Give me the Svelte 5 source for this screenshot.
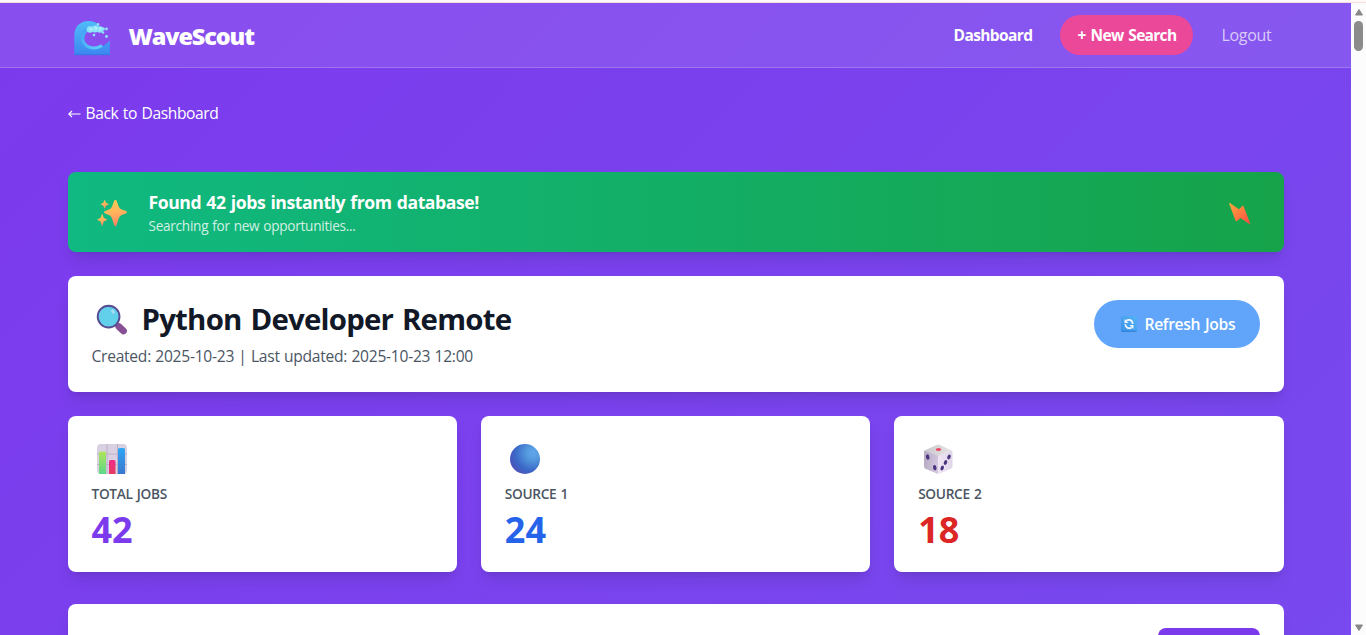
<script>
  const stats = [
    { label: 'TOTAL JOBS', value: 42, tone: 'violet', icon: 'chart' },
    { label: 'SOURCE 1', value: 24, tone: 'blue', icon: 'ball' },
    { label: 'SOURCE 2', value: 18, tone: 'red', icon: 'die' }
  ];
</script>

<div class="window">
  <div class="edge"></div>
  <div class="body">
    <div class="view">
      <nav>
        <div class="container bar">
          <a class="brand" href="#home">
            <svg width="36" height="36" viewBox="0 0 36 36" aria-hidden="true">
              <defs>
                <linearGradient id="wave" x1="0" y1="0" x2="0" y2="1">
                  <stop offset="0" stop-color="#50bdf8" />
                  <stop offset="1" stop-color="#3c86f0" />
                </linearGradient>
                <linearGradient id="curl" x1="0" y1="0" x2="1" y2="1">
                  <stop offset="0" stop-color="#43a0f4" />
                  <stop offset="1" stop-color="#5fd0fa" />
                </linearGradient>
              </defs>
              <path fill="url(#wave)" d="M.3 35V15C.3 6.400 6.500 1 14.500 1c4.300 0 7.800 1.300 10 4.200l2 4.300-12 1C10.500 14 9 20 12.500 24.300c6 6.500 17 3.500 23.300-3.800V35z" />
              <path fill="none" stroke="url(#curl)" stroke-width="3" d="M15 8.500C8 10.500 6.500 17 9.500 22c4 6.800 12 7.500 18.500 3.500" />
              <path fill="#3978e7" d="M.3 34h35.500v1.300H.3z" />
              <g fill="#8ee4f8">
                <circle cx="16" cy="9.500" r="3.300" /><circle cx="21" cy="9" r="3.500" /><circle cx="26" cy="9.500" r="3.200" />
                <circle cx="24" cy="4.500" r="1.400" /><circle cx="29.200" cy="9" r="1.700" /><circle cx="32.500" cy="9" r="1.400" />
                <circle cx="29" cy="12.500" r="1.200" /><circle cx="32.500" cy="16.500" r="1.400" /><circle cx="20" cy="15" r="1.300" />
              </g>
              <g fill="#b5f2fb" opacity=".75"><circle cx="17" cy="9" r="1.600" /><circle cx="22" cy="8" r="1.700" /><circle cx="26.500" cy="8.500" r="1.500" /></g>
            </svg>
            <span>WaveScout</span>
          </a>
          <div class="links">
            <a class="dash" href="#dashboard">Dashboard</a>
            <a class="new" href="#new">+ New Search</a>
            <a class="logout" href="#logout">Logout</a>
          </div>
        </div>
      </nav>

      <main class="container">
        <a class="back" href="#dashboard">
          <svg width="14" height="10" viewBox="0 0 14 10" aria-hidden="true"><path d="M12.500 5H1M4 2 .8 5 4 8" fill="none" stroke="#fff" stroke-width="1.100" /></svg>
          <span>Back to Dashboard</span>
        </a>

        <section class="notice">
          <svg class="spark" width="32" height="32" viewBox="0 0 32 32" aria-hidden="true">
            <defs>
              <linearGradient id="star" x1="0.300" y1="0" x2="0.500" y2="1">
                <stop offset="0" stop-color="#fccb55" /><stop offset=".5" stop-color="#ffb45b" /><stop offset="1" stop-color="#ff7f68" />
              </linearGradient>
            </defs>
            <g fill="url(#star)">
              <path d="M18.300 2.500q1-1.500 2.200 0l2.200 6q.8 2.300 3 3.100l4.300 1.500q2 1.200 0 2.400l-4.300 1.600q-2.200 1-3 3.300l-2.200 6.800q-1.200 2-2.300 0L16 20.400q-.8-2.300-3-3.300l-4-1.600q-2-1.200 0-2.400l4-1.500q2.200-.8 3-3.100z" />
              <path d="m8.700 1.500 1.300 3.300L13 6.200 10 7.700 8.700 11 7.400 7.700 4.500 6.200l2.900-1.400z" />
              <path d="m6.200 15.500 1.500 4.200L11.500 21.700l-3.800 1.900-1.500 4.600-1.600-4.600L1 21.700l3.600-2z" />
            </g>
          </svg>
          <div class="copy">
            <strong>Found 42 jobs instantly from database!</strong>
            <span>Searching for new opportunities...</span>
          </div>
          <svg class="bolt" width="24" height="24" viewBox="0 0 24 24" aria-hidden="true">
            <defs><linearGradient id="bolt" x1="0" y1="0" x2="1" y2="1"><stop offset="0" stop-color="#ffac3c" /><stop offset="1" stop-color="#fb4744" /></linearGradient></defs>
            <path fill="url(#bolt)" d="M1 1.200Q1.300.7 1.800 1L11 7.300 14.500 3.800q.8-.4 1.100.5L22.300 21.700q0 .8-.8.300L12.500 16 8.700 19.300q-.8.200-1.100-.6z" />
          </svg>
        </section>

        <section class="card title">
          <div>
            <h1>
              <svg width="32" height="32" viewBox="0 0 32 32" aria-hidden="true">
                <path d="m20 20 4 4" stroke="#65457e" stroke-width="3.500" />
                <path d="m22.800 22.500 4.700 4.500" stroke="#875096" stroke-width="6.800" stroke-linecap="round" />
                <circle cx="12.600" cy="12.600" r="10.900" fill="#62d0eb" stroke="#584b91" stroke-width="1.900" />
                <path d="M12.500 3.500q5 0 7 4" fill="none" stroke="#53bcdd" stroke-width="1" />
                <ellipse cx="17" cy="7.500" rx="1.700" ry="2.200" fill="#a8dcf8" transform="rotate(-35 17 7.500)" />
              </svg>
              <span>Python Developer Remote</span>
            </h1>
            <p>Created: 2025-10-23 | Last updated: 2025-10-23 12:00</p>
          </div>
          <button class="refresh">
            <svg width="16" height="16" viewBox="0 0 16 16" aria-hidden="true">
              <defs><linearGradient id="tile" x1="0" y1="1" x2="1" y2="0"><stop offset="0" stop-color="#3a91e9" /><stop offset="1" stop-color="#56b3f5" /></linearGradient></defs>
              <rect width="16" height="16" rx="1.500" fill="url(#tile)" /><path d="M.5 15.300h15" stroke="#347bd3" />
              <g fill="none" stroke="#f3f9ff" stroke-width="1.700"><path d="M5.300 4.600c3-1.700 6-.6 6.500 3.200M10.700 11.400c-3 1.700-6 .6-6.500-3.200" /></g>
              <path fill="#f3f9ff" d="M3.500 3v4H7.500zM12.500 13V9H8.500z" />
            </svg>
            <span>Refresh Jobs</span>
          </button>
        </section>

        <section class="stats">
          {#each stats as stat}
            <article class="card stat">
              {#if stat.icon === 'chart'}
                <svg width="32" height="32" viewBox="0 0 32 32" aria-hidden="true">
                  <defs>
                    <linearGradient id="green" x1="0" y1="0" x2="0" y2="1"><stop stop-color="#b1e45a" /><stop offset="1" stop-color="#5bd889" /></linearGradient>
                    <linearGradient id="pink" x1="0" y1="0" x2="0" y2="1"><stop stop-color="#ed2b89" /><stop offset="1" stop-color="#e63c61" /></linearGradient>
                    <linearGradient id="azure" x1="0" y1="0" x2="0" y2="1"><stop stop-color="#30a6f5" /><stop offset="1" stop-color="#3a77cf" /></linearGradient>
                  </defs>
                  <rect x="1" y="1" width="30" height="30" rx="4" fill="#d9d1e2" />
                  <path d="M11 1v30M21.500 1v30M1 11h30M1 21.500h30" stroke="#bab0c5" stroke-width="1" />
                  <path fill="url(#green)" d="M3 31V10q0-1.500 1.500-1.500h4q1.500 0 1.500 1.500v21z" />
                  <path fill="url(#pink)" d="M13 31V18.500q0-1.500 1.500-1.500h3.500q1.500 0 1.500 1.500V31z" />
                  <path fill="url(#azure)" d="M22 31V6.500Q22 5 23.500 5h4Q29 5 29 6.500V31z" />
                </svg>
              {:else if stat.icon === 'ball'}
                <svg width="32" height="32" viewBox="0 0 32 32" aria-hidden="true">
                  <defs>
                    <radialGradient id="ball" cx=".77" cy=".3" r=".85"><stop stop-color="#62a5ea" /><stop offset=".25" stop-color="#559bdf" /><stop offset=".7" stop-color="#3b68c7" /><stop offset="1" stop-color="#4e50b8" /></radialGradient>
                  </defs>
                  <circle cx="16" cy="16" r="15" fill="url(#ball)" />
                </svg>
              {:else}
                <svg width="32" height="32" viewBox="0 0 32 32" aria-hidden="true">
                  <defs>
                    <linearGradient id="dtop"><stop stop-color="#cac8cc" /><stop offset="1" stop-color="#e6e4e7" /></linearGradient>
                    <linearGradient id="dleft" x2="1" y2=".3"><stop stop-color="#b4a8c1" /><stop offset="1" stop-color="#d1c4dc" /></linearGradient>
                    <linearGradient id="dright" x2="1"><stop stop-color="#eee5f4" /><stop offset="1" stop-color="#e0d6e9" /></linearGradient>
                  </defs>
                  <path d="M2.500 7.500 14.500 2q1.800-.8 3.500 0l11.500 5.500-13.200 6z" fill="url(#dtop)" />
                  <path d="M2.500 7.500 16.300 13v18q-.8 0-1.600-.4L3.500 25.800Q2 25 2 23.500V8.800q0-.8.500-1.300z" fill="url(#dleft)" />
                  <path d="M29.500 7.500 16.300 13v18q.8 0 1.600-.4l11-4.800q1.600-.8 1.600-2.300V8.800q0-.8-1-1.300z" fill="url(#dright)" />
                  <ellipse cx="16.500" cy="6.500" rx="2.700" ry="1.600" fill="#ec4968" />
                  <g fill="#4a3480"><ellipse cx="5.700" cy="14" rx="1.700" ry="2.700" transform="rotate(-15 5.700 14)" /><ellipse cx="12.800" cy="24.700" rx="1.700" ry="2.700" transform="rotate(-15 12.800 24.700)" /><ellipse cx="27" cy="14" rx="1.600" ry="2.500" transform="rotate(23 27 14)" /><ellipse cx="23.500" cy="19.500" rx="1.600" ry="2.500" transform="rotate(23 23.500 19.500)" /><ellipse cx="20.200" cy="25" rx="1.600" ry="2.500" transform="rotate(23 20.200 25)" /></g>
                </svg>
              {/if}
              <h2>{stat.label}</h2>
              <b class={stat.tone}>{stat.value}</b>
            </article>
          {/each}
        </section>

        <section class="card list"><div class="action"></div></section>
      </main>
    </div>
    <div class="scrollbar">
      <svg width="10" height="8" viewBox="0 0 10 8" aria-hidden="true"><path d="M1.500 7h7L5 1.500z" fill="#888" stroke="#888" stroke-width="1" stroke-linejoin="round" /></svg>
      <div class="thumb"></div>
      <svg class="down" width="10" height="8" viewBox="0 0 10 8" aria-hidden="true"><path d="M1.500 1h7L5 6.500z" fill="#888" stroke="#888" stroke-width="1" stroke-linejoin="round" /></svg>
    </div>
  </div>
</div>

<style>
  :global(body) { margin: 0; overflow: hidden; }
  .window { height: 635px; display: flex; flex-direction: column; overflow: hidden; font-family: "Open Sans", "Noto Sans", sans-serif; }
  .window * { box-sizing: border-box; }
  .edge { height: 3px; flex: none; background: #fdf9f8; border-bottom: 1px solid #f7dcdf; }
  .body { flex: 1; min-height: 0; display: flex; }
  .view { flex: 1; min-width: 0; overflow: hidden; background: linear-gradient(135deg, #7c3aed, #7849ee); }
  .container { width: 1280px; margin: 0 auto; padding: 0 32px; }
  a { text-decoration: none; color: #fff; white-space: nowrap; }
  svg { display: block; flex: none; }
  nav { height: 65px; background: rgba(255, 255, 255, .1); border-bottom: 1px solid rgba(255, 255, 255, .2); }
  .bar { height: 64px; display: flex; align-items: center; justify-content: space-between; }
  .brand { display: flex; align-items: center; gap: 19px; padding-left: 6px; font-size: 23.500px; font-weight: 800; letter-spacing: -1.150px; line-height: 32px; }
  .brand svg { margin-top: 5px; }
  .brand span { margin-top: 2px; }
  .links { display: flex; align-items: center; font-size: 16px; line-height: 24px; padding-right: 12px; }
  .dash { font-weight: 700; font-size: 15.500px; letter-spacing: -.6px; }
  .new { width: 133px; height: 40px; margin: 0 28px; display: grid; place-items: center; border-radius: 20px; background: #ec4899; font-weight: 700; font-size: 15.500px; letter-spacing: -.7px; word-spacing: 1.500px; }
  .logout { letter-spacing: -.3px; color: rgba(255, 255, 255, .7); }
  main { padding-top: 32px !important; }
  .back { display: flex; align-items: center; gap: 4px; height: 24px; margin-bottom: 48px; font-size: 15.600px; letter-spacing: -.42px; word-spacing: 1px; }
  .back span { margin-top: 1px; }
  .back svg { margin-top: 3px; }
  .notice { height: 80px; display: flex; align-items: center; padding: 0 32px 0 28px; border-radius: 8px; background: linear-gradient(90deg, #10b981, #16a34a); color: #fff; box-shadow: 0 10px 15px -3px rgba(0, 0, 0, .1), 0 4px 6px -4px rgba(0, 0, 0, .1); }
  .spark { margin-top: 3px; }
  .copy { flex: 1; margin-left: 21px; display: flex; flex-direction: column; white-space: nowrap; }
  .copy strong { font-size: 17.600px; line-height: 28px; letter-spacing: -.42px; word-spacing: 1px; }
  .copy span { font-size: 13.600px; line-height: 20px; letter-spacing: -.27px; word-spacing: .7px; opacity: .8; }
  .bolt { margin-top: 4px; }
  .card { background: #fff; border-radius: 8px; box-shadow: 0 10px 15px -3px rgba(0, 0, 0, .1), 0 4px 6px -4px rgba(0, 0, 0, .1); }
  .title { height: 116px; margin-top: 24px; padding: 24px; display: flex; justify-content: space-between; align-items: flex-start; }
  h1 { margin: 0 0 8px; height: 36px; display: flex; align-items: center; gap: 14px; padding-left: 4px; font-size: 29.400px; line-height: 36px; color: #111827; letter-spacing: -.78px; word-spacing: 2px; white-space: nowrap; }
  h1 svg { margin-top: 3px; }
  h1 span { margin-top: 2px; }
  p { margin: 0; font-size: 15.600px; line-height: 24px; color: #4b5563; letter-spacing: -.26px; word-spacing: .5px; white-space: nowrap; }
  .refresh { width: 166px; height: 48px; display: flex; align-items: center; gap: 8px; padding: 0 0 0 27px; border: 0; border-radius: 24px; background: #60a5fa; color: #fff; font: 650 15.700px/24px "Open Sans", "Noto Sans", sans-serif; letter-spacing: -.35px; word-spacing: 1px; white-space: nowrap; }
  .stats { margin-top: 24px; display: grid; grid-template-columns: repeat(3, 1fr); gap: 24px; }
  .stat { height: 156px; padding: 27px 24px 0; }
  .stat svg { margin-left: 4px; }
  h2 { margin: 9px 0 0; font-size: 13.700px; line-height: 20px; font-weight: 550; color: #4b5563; letter-spacing: -.33px; word-spacing: 1px; }
  .stat b { display: block; margin-top: 6px; font-size: 36px; line-height: 40px; letter-spacing: 0; }
  .violet { color: #7c3aed; } .blue { color: #2563eb; } .red { color: #dc2626; }
  .list { height: 180px; margin-top: 32px; padding: 24px; display: flex; justify-content: flex-end; }
  .action { width: 102px; height: 40px; border-radius: 8px; background: #7c3aed; }
  .scrollbar { width: 15px; background: #fcfcfc; display: flex; flex-direction: column; align-items: center; padding: 5px 0 3px; }
  .thumb { width: 9px; height: 30px; margin-top: 5px; border-radius: 5px; background: #8b8b8b; }
  .down { margin-top: auto; }
</style>
